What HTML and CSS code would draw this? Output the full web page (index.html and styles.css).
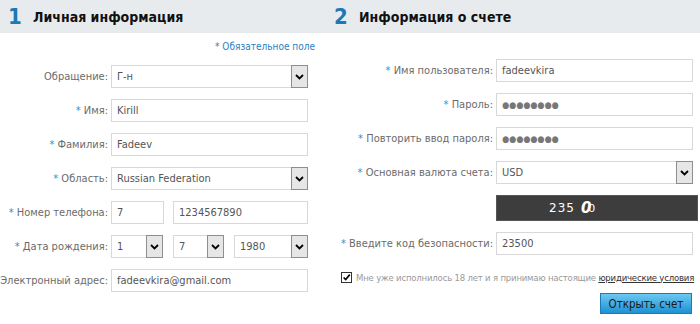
FILE: index.html
```html
<!DOCTYPE html>
<html lang="ru">
<head>
    <meta charset="UTF-8">
    <title>Открыть счет</title>
    <link rel="stylesheet" href="styles.css">
</head>
<body>
<div class="page">
    <!-- 1. Личная информация -->
    <section class="panel panel-personal">
        <h2 class="panel-head"><span class="step">1</span>Личная информация</h2>
        <p class="note">* Обязательное поле</p>
        <div class="form">
            <div class="row">
                <label class="lbl"><span>Обращение:</span></label>
                <div class="field select w197"><span>Г-н</span><i class="arrow"><svg width="9" height="6" viewBox="0 0 9 6"><path d="M1 1l3.5 3.5L8 1" stroke="#000" stroke-width="1.8" fill="none"/></svg></i></div>
            </div>
            <div class="row">
                <label class="lbl"><span><b class="req">*</b> Имя:</span></label>
                <div class="field w197">Kirill</div>
            </div>
            <div class="row">
                <label class="lbl"><span><b class="req">*</b> Фамилия:</span></label>
                <div class="field w197">Fadeev</div>
            </div>
            <div class="row">
                <label class="lbl"><span><b class="req">*</b> Область:</span></label>
                <div class="field select w197"><span>Russian Federation</span><i class="arrow"><svg width="9" height="6" viewBox="0 0 9 6"><path d="M1 1l3.5 3.5L8 1" stroke="#000" stroke-width="1.8" fill="none"/></svg></i></div>
            </div>
            <div class="row">
                <label class="lbl"><span><b class="req">*</b> Номер телефона:</span></label>
                <div class="field w53">7</div>
                <div class="field w135 ml9">1234567890</div>
            </div>
            <div class="row">
                <label class="lbl"><span><b class="req">*</b> Дата рождения:</span></label>
                <div class="field select w52"><span>1</span><i class="arrow"><svg width="9" height="6" viewBox="0 0 9 6"><path d="M1 1l3.5 3.5L8 1" stroke="#000" stroke-width="1.8" fill="none"/></svg></i></div>
                <div class="field select w51 ml10"><span>7</span><i class="arrow"><svg width="9" height="6" viewBox="0 0 9 6"><path d="M1 1l3.5 3.5L8 1" stroke="#000" stroke-width="1.8" fill="none"/></svg></i></div>
                <div class="field select w74 ml10"><span>1980</span><i class="arrow"><svg width="9" height="6" viewBox="0 0 9 6"><path d="M1 1l3.5 3.5L8 1" stroke="#000" stroke-width="1.8" fill="none"/></svg></i></div>
            </div>
            <div class="row">
                <label class="lbl"><span><b class="req">*</b> Электронный адрес:</span></label>
                <div class="field w197">fadeevkira@gmail.com</div>
            </div>
        </div>
    </section>

    <!-- 2. Информация о счете -->
    <section class="panel panel-account">
        <h2 class="panel-head"><span class="step">2</span>Информация о счете</h2>
        <div class="form">
            <div class="row">
                <label class="lbl"><span><b class="req">*</b> Имя пользователя:</span></label>
                <div class="field w197">fadeevkira</div>
            </div>
            <div class="row">
                <label class="lbl"><span><b class="req">*</b> Пароль:</span></label>
                <div class="field w197 dots">&#9679;&#9679;&#9679;&#9679;&#9679;&#9679;&#9679;&#9679;</div>
            </div>
            <div class="row">
                <label class="lbl"><span><b class="req">*</b> Повторить ввод пароля:</span></label>
                <div class="field w197 dots">&#9679;&#9679;&#9679;&#9679;&#9679;&#9679;&#9679;&#9679;</div>
            </div>
            <div class="row">
                <label class="lbl"><span><b class="req">*</b> Основная валюта счета:</span></label>
                <div class="field select w197"><span>USD</span><i class="arrow"><svg width="9" height="6" viewBox="0 0 9 6"><path d="M1 1l3.5 3.5L8 1" stroke="#000" stroke-width="1.8" fill="none"/></svg></i></div>
            </div>
            <div class="captcha"><span class="c-small">235</span><span class="c-big">0</span><span class="c-thin">0</span></div>
            <div class="row">
                <label class="lbl"><span><b class="req">*</b> Введите код безопасности:</span></label>
                <div class="field w197">23500</div>
            </div>
            <div class="agree">
                <i class="check"><svg width="11" height="11" viewBox="0 0 11 11"><path d="M2 5.5l2.5 2.5L9.5 2" stroke="#000" stroke-width="2" fill="none"/></svg></i>
                <span>Мне уже исполнилось 18 лет и я принимаю настоящие <a href="#">юридические условия</a></span>
            </div>
            <div class="actions">
                <button class="btn">Открыть счет</button>
            </div>
        </div>
    </section>
</div>
</body>
</html>
```

FILE: styles.css
```css
/* Base */
body { margin: 0; font-family: "DejaVu Sans Condensed", "DejaVu Sans", sans-serif; font-size: 11px; color: #6b6b6b; background: #fff; }
.page { display: flex; width: 700px; overflow: hidden; }

/* Panels */
.panel-personal { width: 330px; flex-shrink: 0; }
.panel-account { width: 370px; flex-shrink: 0; }
.panel-head { margin: 0; height: 33px; background: #e8ebee; display: flex; align-items: center; font-size: 14px; font-weight: bold; color: #111; }
.panel-personal .panel-head { padding-left: 8px; }
.panel-account .panel-head { padding-left: 4px; }
.step { width: 25px; color: #1b79b5; font-size: 22px; }
.note { margin: 0; height: 25px; padding: 7px 15px 0 0; text-align: right; font-size: 10px; line-height: 14px; color: #2a80c2; }
.panel-account .form { padding-top: 26px; }

/* Form rows */
.form { display: flex; flex-direction: column; gap: 11px; }
.row { display: flex; align-items: center; height: 23px; }
.lbl { display: flex; justify-content: flex-end; white-space: nowrap; width: 108px; margin-right: 3px; flex-shrink: 0; }
.panel-account .lbl { width: 163px; }
.req { color: #3a8cc6; font-weight: normal; }

/* Fields */
.field { box-sizing: border-box; height: 23px; border: 1px solid #d8d8d8; background: #fff; color: #555; padding: 0 5px; display: flex; align-items: center; white-space: nowrap; flex-shrink: 0; }
.select { padding-right: 0; }
.arrow { margin: -1px -1px -1px auto; box-sizing: border-box; width: 17px; height: 23px; border: 1px solid #8e8e8e; background: #e6e6e6; display: flex; align-items: center; justify-content: center; }
.dots { font-size: 9px; color: #777; }
.w197 { width: 197px; }
.w135 { width: 135px; }
.w74 { width: 74px; }
.w53 { width: 53px; }
.w52 { width: 52px; }
.w51 { width: 51px; }
.ml9 { margin-left: 9px; }
.ml10 { margin-left: 10px; }

/* Captcha */
.captcha { box-sizing: border-box; margin-left: 166px; width: 202px; height: 26px; background: #3d3d3d; border: 1px solid #555; display: flex; align-items: center; padding-left: 52px; color: #fff; font-family: "DejaVu Sans", sans-serif; }
.c-small { font-size: 12px; letter-spacing: 1px; margin-right: 6px; }
.c-big { font-size: 15px; font-weight: bold; font-style: italic; }
.c-thin { font-size: 11px; margin-left: -3px; }

/* Agreement + button */
.agree { display: flex; align-items: center; height: 22px; padding-left: 11px; font-size: 9.5px; letter-spacing: -0.2px; color: #9a9a9a; white-space: nowrap; }
.agree a { color: #333; }
.check { box-sizing: border-box; width: 11px; height: 11px; border: 1px solid #333; background: #fff; display: flex; align-items: center; justify-content: center; margin-right: 4px; }
.actions { display: flex; justify-content: flex-end; padding-right: 8px; margin-top: -6px; }
.btn { width: 92px; height: 21px; border: 1px solid #1b7db8; background: linear-gradient(#6bc8f1, #1d92d2); color: #1a1a1a; font-family: inherit; font-size: 11.5px; padding: 0; }
```
